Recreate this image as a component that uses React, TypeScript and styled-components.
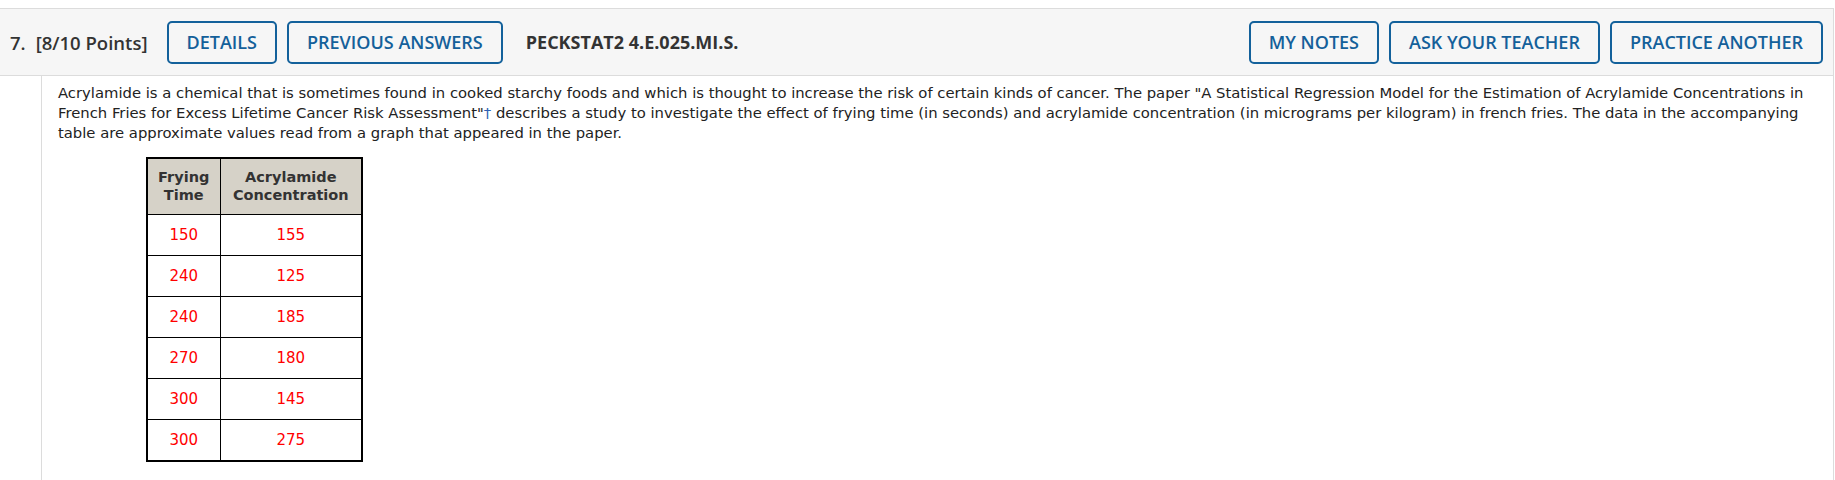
import styled, { createGlobalStyle } from "styled-components";

const GlobalStyle = createGlobalStyle`
  html, body {
    margin: 0;
    padding: 0;
    background: #fff;
  }
  body {
    font-family: "DejaVu Sans", Verdana, sans-serif;
  }
`;

const Page = styled.div`
  padding-top: 8px;
  width: 1834px;
`;

const Question = styled.div`
  border-top: 1px solid #dcdcdc;
  border-right: 1px solid #dcdcdc;
`;

const Header = styled.div`
  display: flex;
  align-items: center;
  height: 66px;
  padding: 0 10px;
  background: #f6f6f6;
  border-bottom: 1px solid #dcdcdc;
  font-family: "Open Sans", "Liberation Sans", sans-serif;
`;

const Title = styled.div`
  display: flex;
  gap: 10px;
  font-size: 18.5px;
  font-weight: 600;
  color: #333;
  margin-right: 19px;
`;

const Group = styled.div<{ $right?: boolean }>`
  display: flex;
  gap: 10px;
  margin-left: ${(p) => (p.$right ? "auto" : "0")};
`;

const Button = styled.button`
  height: 43px;
  padding: 0 18px;
  background: transparent;
  border: 2px solid #13619b;
  border-radius: 5px;
  color: #14609a;
  font-family: "Open Sans", "Liberation Sans", sans-serif;
  font-size: 18px;
  font-weight: 600;
  cursor: pointer;
`;

const Code = styled.div`
  margin-left: 23px;
  font-size: 18px;
  font-weight: 700;
  color: #333;
`;

const Body = styled.div`
  margin-left: 41px;
  border-left: 1px solid #dcdcdc;
  padding: 7px 8px 20px 16px;
`;

const Text = styled.p`
  margin: 0;
  font-size: 14.8px;
  line-height: 20px;
  color: #222;
`;

const Dagger = styled.span`
  color: #2b5fb4;
`;

const Table = styled.table`
  margin: 14px 0 0 88px;
  border-collapse: collapse;
  border: 2px solid #000;
`;

const Th = styled.th<{ $w: number }>`
  width: ${(p) => p.$w}px;
  height: 56px;
  padding: 0 4px;
  background: #d6d2c8;
  color: #333;
  font-size: 14.5px;
  font-weight: 700;
  line-height: 18px;
  border: 1px solid #000;
  box-sizing: border-box;
`;

const Td = styled.td`
  height: 40px;
  padding: 0;
  text-align: center;
  font-size: 15px;
  color: #ff0000;
  border: 1px solid #000;
`;

const rows: [number, number][] = [
  [150, 155],
  [240, 125],
  [240, 185],
  [270, 180],
  [300, 145],
  [300, 275],
];

export default function App() {
  return (
    <>
      <GlobalStyle />
      <Page>
        <Question>
          <Header>
            <Title>
              <span>7.</span>
              <span>[8/10 Points]</span>
            </Title>
            <Group>
              <Button>DETAILS</Button>
              <Button>PREVIOUS ANSWERS</Button>
            </Group>
            <Code>PECKSTAT2 4.E.025.MI.S.</Code>
            <Group $right>
              <Button>MY NOTES</Button>
              <Button>ASK YOUR TEACHER</Button>
              <Button>PRACTICE ANOTHER</Button>
            </Group>
          </Header>
          <Body>
            <Text>
              Acrylamide is a chemical that is sometimes found in cooked starchy foods and which is
              thought to increase the risk of certain kinds of cancer. The paper "A Statistical
              Regression Model for the Estimation of Acrylamide Concentrations in French Fries for
              Excess Lifetime Cancer Risk Assessment"<Dagger>†</Dagger> describes a study to
              investigate the effect of frying time (in seconds) and acrylamide concentration (in
              micrograms per kilogram) in french fries. The data in the accompanying table are
              approximate values read from a graph that appeared in the paper.
            </Text>
            <Table>
              <thead>
                <tr>
                  <Th $w={73}>
                    Frying
                    <br />
                    Time
                  </Th>
                  <Th $w={142}>
                    Acrylamide
                    <br />
                    Concentration
                  </Th>
                </tr>
              </thead>
              <tbody>
                {rows.map(([t, c], i) => (
                  <tr key={i}>
                    <Td>{t}</Td>
                    <Td>{c}</Td>
                  </tr>
                ))}
              </tbody>
            </Table>
          </Body>
        </Question>
      </Page>
    </>
  );
}
